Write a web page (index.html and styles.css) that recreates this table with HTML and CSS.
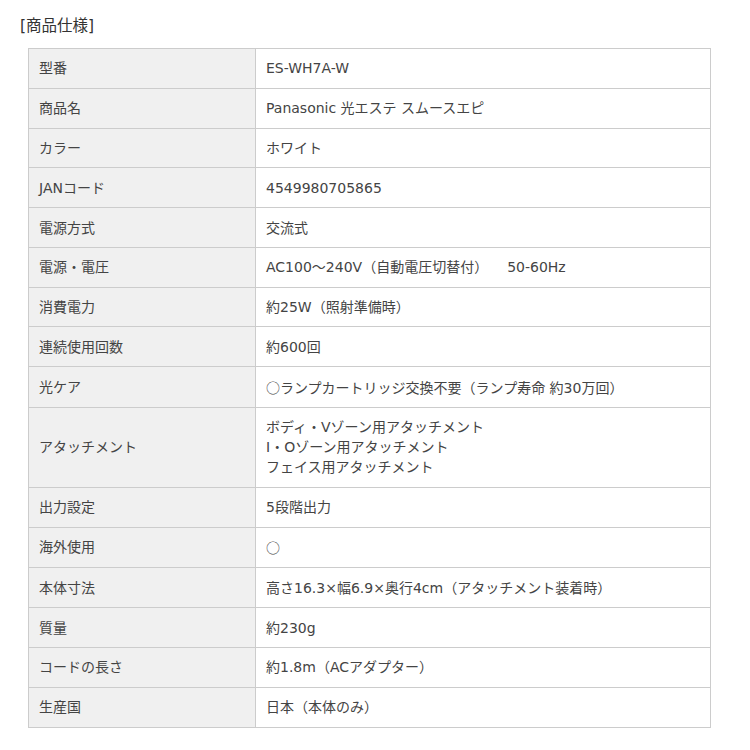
FILE: index.html
```html
<!DOCTYPE html>
<html lang="ja">
<head>
<meta charset="utf-8">
<title>商品仕様</title>
<link rel="stylesheet" href="styles.css">
</head>
<body>
<div class="spec">
  <h2 class="spec-title">[商品仕様]</h2>
  <table class="spec-table">
    <colgroup><col class="col-label"><col class="col-value"></colgroup>
    <tbody>
      <tr><th>型番</th><td>ES-WH7A-W</td></tr>
      <tr><th>商品名</th><td>Panasonic 光エステ スムースエピ</td></tr>
      <tr><th>カラー</th><td>ホワイト</td></tr>
      <tr><th>JANコード</th><td>4549980705865</td></tr>
      <tr><th>電源方式</th><td>交流式</td></tr>
      <tr><th>電源・電圧</th><td>AC100～240V（自動電圧切替付）<span class="gap"></span>50-60Hz</td></tr>
      <tr><th>消費電力</th><td>約25W（照射準備時）</td></tr>
      <tr><th>連続使用回数</th><td>約600回</td></tr>
      <tr><th>光ケア</th><td><span class="sym">○</span>ランプカートリッジ交換不要（ランプ寿命 約30万回）</td></tr>
      <tr><th>アタッチメント</th><td>ボディ・Vゾーン用アタッチメント<br>I・Oゾーン用アタッチメント<br>フェイス用アタッチメント</td></tr>
      <tr><th>出力設定</th><td>5段階出力</td></tr>
      <tr><th>海外使用</th><td><span class="sym">○</span></td></tr>
      <tr><th>本体寸法</th><td>高さ16.3×幅6.9×奥行4cm（アタッチメント装着時）</td></tr>
      <tr><th>質量</th><td>約230g</td></tr>
      <tr><th>コードの長さ</th><td>約1.8m（ACアダプター）</td></tr>
      <tr><th>生産国</th><td>日本（本体のみ）</td></tr>
    </tbody>
  </table>
</div>
</body>
</html>
```
FILE: styles.css
```css
html, body {
  margin: 0;
  padding: 0;
  background: #ffffff;
}

body {
  font-family: "DejaVu Sans", "Noto Sans CJK JP", sans-serif;
  color: #444444;
}

.spec {
  padding: 16px 0 0 20px;
}

.spec-title {
  margin: 0 0 12px 0;
  font-size: 15.5px;
  font-weight: normal;
  line-height: 20px;
  color: #333333;
}

.spec-table {
  margin-left: 8px;
  width: 683px;
  border-collapse: collapse;
  font-size: 14px;
  line-height: 20px;
}

.col-label {
  width: 227px;
}

.spec-table th,
.spec-table td {
  border: 1px solid #cccccc;
  padding: 9.4px 10px;
  text-align: left;
  vertical-align: middle;
  font-weight: normal;
}

.spec-table th {
  background: #f0f0f0;
  color: #444444;
}

.spec-table td {
  background: #ffffff;
}

.sym {
  font-family: "Noto Sans CJK JP", sans-serif;
}

.gap {
  display: inline-block;
  width: 19px;
}
```
